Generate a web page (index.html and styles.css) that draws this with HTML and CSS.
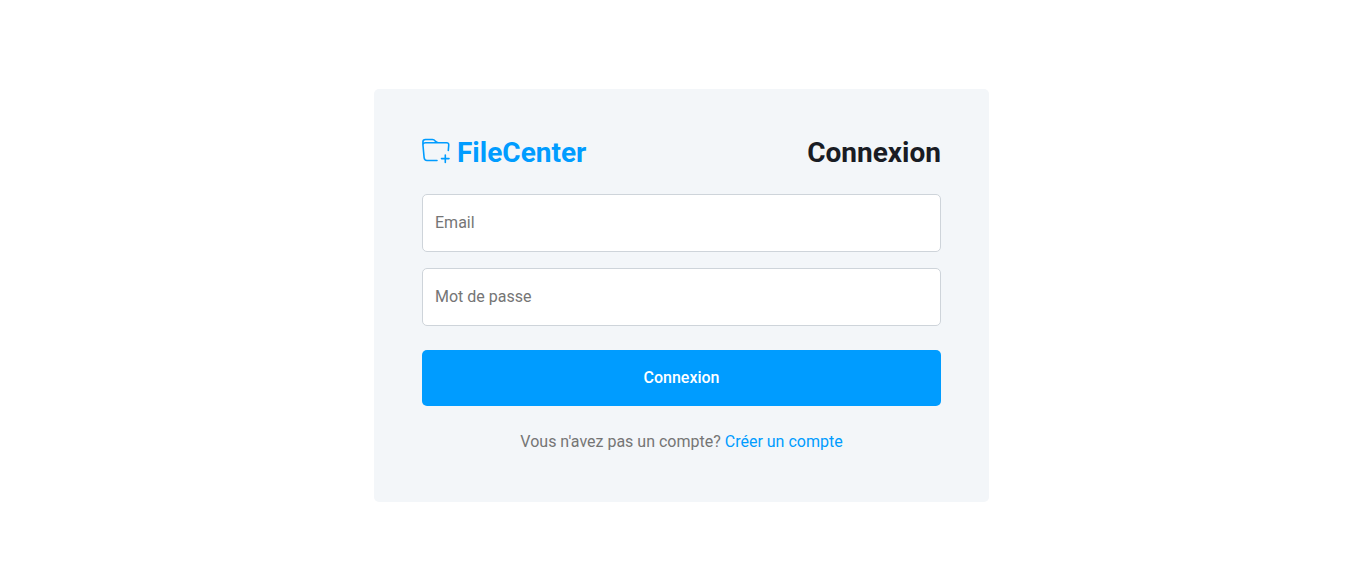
FILE: index.html
```html
<!DOCTYPE html>
<html lang="fr">
<head>
<meta charset="utf-8">
<meta name="viewport" content="width=device-width, initial-scale=1">
<title>FileCenter - Connexion</title>
<link rel="stylesheet" href="styles.css">
</head>
<body>
<main class="page">
  <form class="card">
    <header class="card-header">
      <a class="brand" href="#">
        <svg class="brand-icon" viewBox="0 0 28 28" aria-hidden="true">
          <path d="M15 23.500H5C3.200 23.500 2.300 22.600 2.100 20.500L.9 7.500V5C.9 3.300 1.800 2.500 3.500 2.500H10.500C12.300 2.500 12.600 3.200 13.500 4.300C14.300 5.300 14.800 5.700 16.500 5.700H24.500C26.300 5.700 26.900 6.600 26.700 8.500L26.300 13.500M.9 7.500C1.100 6.400 1.800 5.700 3.500 5.700H16.500"/>
          <path d="M23.300 18V25.500M19.500 21.600H27"/>
        </svg>
        <span>FileCenter</span>
      </a>
      <h1 class="title">Connexion</h1>
    </header>
    <input class="field" type="email" placeholder="Email" aria-label="Email">
    <input class="field" type="password" placeholder="Mot de passe" aria-label="Mot de passe">
    <button class="submit" type="button">Connexion</button>
    <p class="signup">Vous n'avez pas un compte? <a href="#">Créer un compte</a></p>
  </form>
</main>
</body>
</html>
```
FILE: styles.css
```css
* { box-sizing: border-box; }
body {
  margin: 0;
  font: 400 16px/24px Roboto, "Liberation Sans", sans-serif;
  color: #757575;
  background: #fff;
}
a { color: #009cff; text-decoration: none; }
.page {
  min-height: 100vh;
  display: flex;
  align-items: center;
  justify-content: center;
  padding: 14px 25px 0 24px;
}
.card {
  width: 100%;
  max-width: 615px;
  padding: 48px;
  border-radius: 5px;
  background: #f3f6f9;
}
.card-header {
  display: flex;
  align-items: center;
  justify-content: space-between;
  margin-bottom: 26px;
}
.brand, .title {
  margin: 0;
  font-size: 28px;
  line-height: 31px;
  font-weight: 700;
}
.brand { display: flex; align-items: flex-start; gap: 7px; }
.brand-icon {
  width: 28px;
  height: 28px;
  fill: none;
  stroke: #009cff;
  stroke-width: 1.6;
  stroke-linecap: round;
  stroke-linejoin: round;
}
.title { color: #191c24; }
.field {
  display: block;
  width: 100%;
  height: 58px;
  margin-bottom: 16px;
  padding: 15px 12px 17px;
  border: 1px solid #ced4da;
  border-radius: 5px;
  background: #fff;
  font: inherit;
  color: inherit;
}
.field::placeholder { color: #757575; }
.submit {
  display: block;
  width: 100%;
  height: 56px;
  margin: 24px 0;
  border: 0;
  border-radius: 5px;
  background: #009cff;
  color: #fff;
  font: inherit;
  font-weight: 500;
}
.signup { margin: 0; text-align: center; }
```
